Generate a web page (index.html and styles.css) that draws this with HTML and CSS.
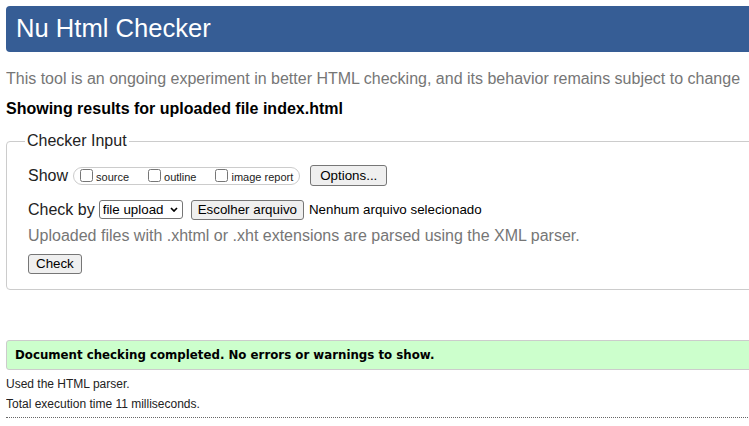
FILE: index.html
```html
<!DOCTYPE html>
<html lang="en">
<head>
<meta charset="utf-8">
<title>Nu Html Checker</title>
<link rel="stylesheet" href="styles.css">
</head>
<body>
<header class="masthead"><h1 class="title">Nu Html Checker</h1></header>
<p class="intro">This tool is an ongoing experiment in better HTML checking, and its behavior remains subject to change</p>
<p class="showing">Showing results for uploaded file index.html</p>
<form class="checker">
  <fieldset class="input">
    <legend class="legend">Checker Input</legend>
    <div class="content">
      <div class="row">
        <span class="label label-show">Show</span>
        <div class="pill">
          <label class="opt"><input type="checkbox"><span>source</span></label>
          <label class="opt"><input type="checkbox"><span>outline</span></label>
          <label class="opt"><input type="checkbox"><span>image report</span></label>
        </div>
        <button class="btn btn-options" type="button">Options...</button>
      </div>
      <div class="row row-by">
        <span class="label">Check by</span>
        <span class="select"><select><option>file upload</option></select><svg viewBox="0 0 8 5" aria-hidden="true"><polyline points="1,1 4,4 7,1" fill="none" stroke="#000" stroke-width="1.7"/></svg></span>
        <button class="btn" type="button">Escolher arquivo</button>
        <span class="file-status">Nenhum arquivo selecionado</span>
      </div>
      <p class="hint">Uploaded files with .xhtml or .xht extensions are parsed using the XML parser.</p>
      <div class="row row-check"><button class="btn btn-check" type="button">Check</button></div>
    </div>
  </fieldset>
</form>
<div class="success"><p>Document checking completed. No errors or warnings to show.</p></div>
<p class="meta">Used the HTML parser.</p>
<p class="meta">Total execution time 11 milliseconds.</p>
<div class="rule"></div>
</body>
</html>
```
FILE: styles.css
```css
html { overflow: hidden; }
body {
  margin: 6px 0 0 6px;
  width: 790px;
  font-family: "Liberation Sans", Arial, sans-serif;
  color: #000;
}
.masthead {
  height: 46px;
  background: #365d95;
  border-radius: 4px 0 0 4px;
}
.title {
  margin: 0;
  padding-left: 10px;
  font: 400 25.6px/44px "Liberation Sans", Arial, sans-serif;
  color: #fff;
}
.intro {
  margin: 18px 0 0;
  font-size: 16px;
  line-height: 18px;
  color: #767676;
  white-space: nowrap;
}
.showing {
  margin: 12px 0 0;
  font-weight: 700;
  font-size: 16px;
  line-height: 18px;
}
.checker { margin: 14px 0 0; }
.input {
  margin: 0;
  min-width: 0;
  padding: 15px 0 15px 18px;
  border: 1px solid #ccc;
  border-radius: 4px;
}
.legend {
  padding: 0 2px;
  font-size: 16px;
  line-height: 18px;
  color: #222;
}
.content { padding-left: 3px; }
.row {
  display: flex;
  align-items: center;
  height: 21px;
}
.row-by { margin-top: 13px; }
.row-check { margin-top: 9px; height: 20px; }
.hint {
  margin: 7px 0 0;
  font-size: 16px;
  line-height: 18px;
  color: #767676;
}
.label {
  font-size: 16px;
  line-height: 18px;
  color: #222;
  margin-right: 4px;
}
.label-show { margin-right: 5px; }
.pill {
  display: flex;
  align-items: center;
  gap: 15px;
  height: 16px;
  padding: 0 6px 0 2px;
  border: 1px solid #ccc;
  border-radius: 9px;
  margin-right: 10px;
}
.opt {
  display: flex;
  align-items: flex-end;
  font-size: 11px;
  line-height: 10px;
  color: #222;
}
.opt input {
  margin: 0 3px 0 4px;
  width: 13px;
  height: 13px;
}
.btn {
  box-sizing: border-box;
  height: 20px;
  padding: 1px 6px;
  border: 1px solid #767676;
  border-radius: 3px;
  background: #efefef;
  font: 13.33px/16px "Liberation Sans", Arial, sans-serif;
  color: #000;
}
.btn-options { height: 21px; padding: 1px 9px; }
.btn-check { padding: 1px 7px; }
.select {
  display: flex;
  align-items: center;
  box-sizing: border-box;
  width: 84px;
  height: 19px;
  border: 1px solid #767676;
  border-radius: 3px;
  margin-right: 8px;
  padding-right: 4px;
  background: #fff;
}
.select select {
  appearance: none;
  -webkit-appearance: none;
  flex: 1;
  min-width: 0;
  height: 100%;
  border: 0;
  padding: 0 0 0 3px;
  background: transparent;
  font: 13.33px "Liberation Sans", Arial, sans-serif;
  color: #000;
  outline: none;
}
.select svg { width: 8px; height: 5px; flex: none; }
.file-status {
  margin-left: 5px;
  font-size: 13.33px;
}
.success {
  margin-top: 50px;
  padding: 7px 0 7px 8px;
  border: 1px solid #ccc;
  border-radius: 3px 0 0 3px;
  background: #ccffcc;
}
.success p {
  margin: 0;
  font: 700 11.8px/14px "DejaVu Sans", Verdana, sans-serif;
}
.meta {
  margin: 7px 0 0;
  font-size: 12px;
  line-height: 14px;
  color: #222;
}
.meta + .meta { margin-top: 6px; }
.rule {
  margin-top: 6px;
  border-top: 1px dotted #666;
}
```
